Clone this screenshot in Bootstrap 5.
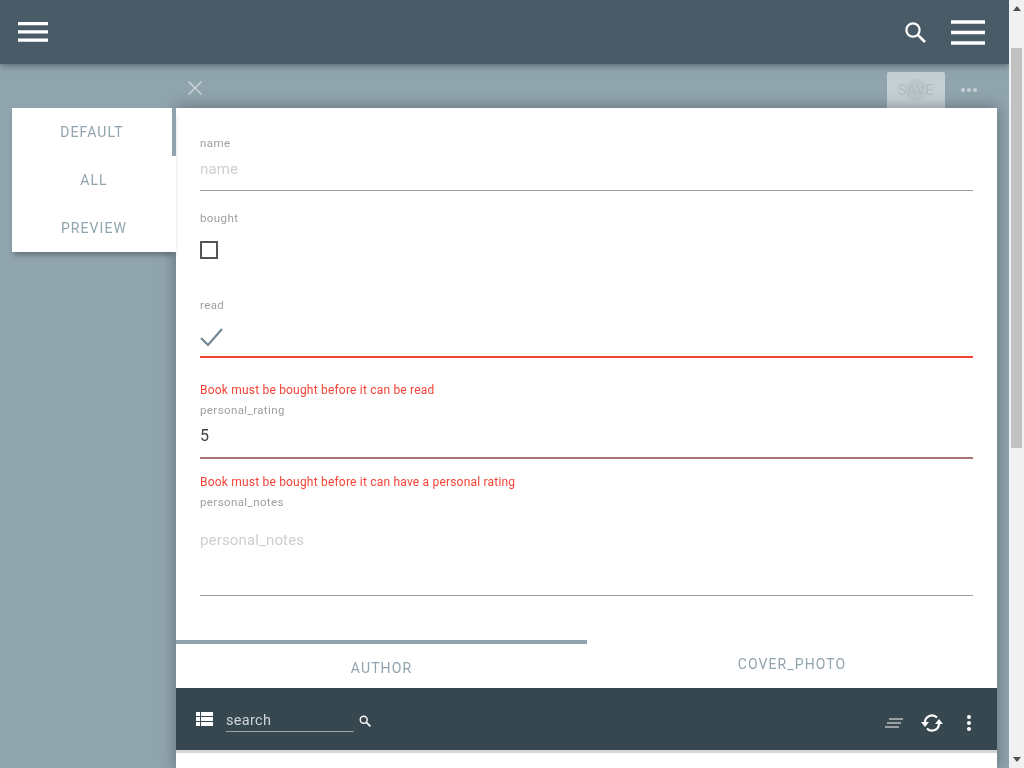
<!DOCTYPE html>
<html lang="en">
<head>
    <meta charset="UTF-8">
    <meta name="viewport" content="width=device-width, initial-scale=1.0">
    <title>Book</title>
    <link href="https://cdn.jsdelivr.net/npm/bootstrap@5.3.0/dist/css/bootstrap.min.css" rel="stylesheet">
    <style>
        html, body { height: 100%; }
        body { font-family: Roboto, "Liberation Sans", sans-serif; background: #90a4ae; overflow: hidden; }
        /* grey text edges, as in the picture */
        .lbl, .txt-in, .err-msg, .rate-in, .notes-in, .side-tab, .sub-tab, .search-box, .save-btn span { will-change: transform; }
        .page-main { width: 1009px; height: 768px; overflow: hidden; }
        .top-bar { height: 64px; background: #485b66; box-shadow: 0 2px 6px rgba(0,0,0,.35); padding: 0 24px 0 18px; position: relative; z-index: 2; }
        .sub-bar { height: 44px; padding-left: 187px; padding-right: 16px; padding-top: 8px; }
        .save-btn { width: 58px; height: 36px; background: #c4cfd3; border-radius: 2px 2px 0 0; color: #b3b9bd; font-size: 14px; letter-spacing: .6px; position: relative; }
        .save-btn::before { content: ""; position: absolute; left: 18px; top: 7px; width: 22px; height: 22px; border-radius: 50%; background: #bbc6ca; }
        .save-btn span { position: relative; }
        .more-dots { width: 48px; }
        .side-tabs { width: 164px; margin-left: 12px; height: 144px; background: #fff; box-shadow: 0 5px 5px -2px rgba(0,0,0,.3); flex: none; position: relative; z-index: 1; }
        .side-tab { height: 48px; color: #90a4ae; font-size: 14px; letter-spacing: 1.1px; }
        .side-tab-on { border-right: 4px solid #90a4ae; }
        .form-sheet { width: 821px; background: #fff; height: 660px; box-shadow: 0 0 14px rgba(0,0,0,.35); position: relative; }
        .form-area { padding: 0 24px; height: 532px; }
        .lbl { font-size: 11.5px; letter-spacing: .4px; color: #a0a0a0; line-height: 14px; }
        .txt-in { font-size: 15px; letter-spacing: .15px; line-height: 20px; color: #cfcfcf; border-bottom: 1px solid #9e9e9e; }
        .fld-name { padding-top: 28px; height: 83px; }
        .fld-name .txt-in { padding: 9px 0 11px; }
        .fld-bought { padding-top: 20px; height: 87px; }
        .box-off { width: 18px; height: 18px; border: 2px solid #555; margin-top: 16px; }
        .fld-read { padding-top: 20px; height: 124px; }
        .check-line { height: 45px; border-bottom: 2px solid #f44336; padding-top: 14px; margin-bottom: 25px; margin-top: 1px; }
        .err-msg { font-size: 12px; line-height: 14px; color: #f44336; letter-spacing: .2px; }
        .fld-rate { padding-top: 1px; }
        .rate-in { color: #424242; font-size: 16px; line-height: 20px; padding: 9px 0 11px; border-bottom: 2px solid #a97377; margin-bottom: 16px; }
        .fld-notes { padding-top: 6px; }
        .notes-in { color: #cfcfcf; font-size: 15px; letter-spacing: .15px; line-height: 20px; height: 87px; padding-top: 21px; border-bottom: 1px solid #9e9e9e; }
        .sub-tabs { height: 48px; }
        .sub-tab { color: #90a4ae; font-size: 14px; letter-spacing: 1.1px; text-align: center; }
        .sub-tab-on { width: 411px; border-top: 4px solid #90a4ae; padding-top: 14px; }
        .sub-tab-off { width: 410px; padding-top: 14px; }
        .list-bar { height: 65px; background: #37474f; border-bottom: 3px solid #d6d6d6; padding: 0 25px 0 20px; }
        .search-box { width: 128px; margin-left: 13px; margin-top: 5px; color: #cfd4d6; font-size: 14.5px; letter-spacing: .3px; line-height: 20px; border-bottom: 1px solid #9aa5aa; }
        .search-mag { margin-left: 5px; }
        .menu-big { margin-left: 25px; }
        .tools-right { margin-top: 8px; }
        .tool-sync { margin: 0 23px 0 18px; }
        .scroll-rail { width: 15px; height: 768px; background: #f1f1f1; }
        .scroll-arrow { height: 17px; }
        .scroll-space { flex: 1; padding: 31px 2px 0; }
        .scroll-thumb { height: 400px; background: #c1c1c1; }
    </style>
</head>
<body class="d-flex">
    <div class="page-main">
        <div class="top-bar d-flex align-items-center justify-content-between">
            <svg width="30" height="20" viewBox="0 0 30 20"><path d="M0 1.6h30M0 9.8h30M0 18.2h30" stroke="#fff" stroke-width="3.2"/></svg>
            <div class="d-flex align-items-center">
                <svg width="21" height="21" viewBox="0 0 21 21"><circle cx="8" cy="8" r="6.6" fill="none" stroke="#fff" stroke-width="2.2"/><path d="M12.8 12.8l7.2 7.2" stroke="#fff" stroke-width="2.6"/></svg>
                <svg width="34" height="25" viewBox="0 0 34 25" class="menu-big"><path d="M0 2h34M0 12.5h34M0 23h34" stroke="#fff" stroke-width="3.6"/></svg>
            </div>
        </div>
        <div class="sub-bar d-flex justify-content-between">
            <svg width="16" height="16" viewBox="0 0 16 16" class="mt-2"><path d="M1.5 1.5l13 13M14.5 1.5l-13 13" stroke="#ccd3d6" stroke-width="1.5"/></svg>
            <div class="d-flex">
                <div class="save-btn d-flex align-items-center justify-content-center"><span>SAVE</span></div>
                <div class="more-dots d-flex justify-content-center align-items-center">
                    <svg width="18" height="16" viewBox="0 0 18 16"><g fill="#c6d0d4"><circle cx="3" cy="8" r="2"/><circle cx="9" cy="8" r="2"/><circle cx="15" cy="8" r="2"/></g></svg>
                </div>
            </div>
        </div>
        <div class="d-flex">
            <div class="side-tabs">
                <div class="side-tab side-tab-on d-flex align-items-center justify-content-center">DEFAULT</div>
                <div class="side-tab d-flex align-items-center justify-content-center">ALL</div>
                <div class="side-tab d-flex align-items-center justify-content-center">PREVIEW</div>
            </div>
            <div class="form-sheet">
                <div class="form-area">
                    <div class="fld-name">
                        <div class="lbl">name</div>
                        <div class="txt-in">name</div>
                    </div>
                    <div class="fld-bought">
                        <div class="lbl">bought</div>
                        <div class="box-off"></div>
                    </div>
                    <div class="fld-read">
                        <div class="lbl">read</div>
                        <div class="check-line">
                            <svg width="24" height="20" viewBox="0 0 24 20" class="d-block"><path d="M1 11l7 7L22 2" fill="none" stroke="#6f8894" stroke-width="2.2"/></svg>
                        </div>
                        <div class="err-msg">Book must be bought before it can be read</div>
                    </div>
                    <div class="fld-rate">
                        <div class="lbl">personal_rating</div>
                        <div class="rate-in">5</div>
                        <div class="err-msg">Book must be bought before it can have a personal rating</div>
                    </div>
                    <div class="fld-notes">
                        <div class="lbl">personal_notes</div>
                        <div class="notes-in">personal_notes</div>
                    </div>
                </div>
                <div class="sub-tabs d-flex">
                    <div class="sub-tab sub-tab-on">AUTHOR</div>
                    <div class="sub-tab sub-tab-off">COVER_PHOTO</div>
                </div>
                <div class="list-bar d-flex align-items-center justify-content-between">
                    <div class="d-flex align-items-center">
                        <svg width="17" height="14" viewBox="0 0 17 14"><path fill="#fff" d="M0 0h4v4H0zM5 0h12v4H5zM0 5h4v4H0zM5 5h12v4H5zM0 10h4v4H0zM5 10h12v4H5z"/></svg>
                        <div class="search-box">search</div>
                        <svg width="12" height="12" viewBox="0 0 12 12" class="search-mag mt-1"><circle cx="4.7" cy="4.7" r="3.5" fill="none" stroke="#fff" stroke-width="1.4"/><path d="M7.4 7.4l4 4" stroke="#fff" stroke-width="1.6"/></svg>
                    </div>
                    <div class="tools-right d-flex align-items-center">
                        <svg width="18" height="10" viewBox="0 0 18 10"><path d="M4 1h14M2 5h14M0 9h14" stroke="#9a9fa2" stroke-width="2"/></svg>
                        <svg width="22" height="18" viewBox="0 0 22 18" class="tool-sync"><g fill="none" stroke="#fff" stroke-width="2.2"><path d="M4 8.5a7 7 0 0 1 12-5"/><path d="M18 9.5a7 7 0 0 1-12 5"/></g><path fill="#fff" d="M0 8h8l-4 5zM14 10h8l-4-5z"/></svg>
                        <svg width="6" height="18" viewBox="0 0 6 18"><g fill="#fff"><circle cx="3" cy="3" r="2"/><circle cx="3" cy="9" r="2"/><circle cx="3" cy="15" r="2"/></g></svg>
                    </div>
                </div>
            </div>
        </div>
    </div>
    <div class="scroll-rail d-flex flex-column">
        <div class="scroll-arrow d-flex align-items-center justify-content-center">
            <svg width="8" height="5" viewBox="0 0 8 5"><path d="M0 5h8L4 0z" fill="#505050"/></svg>
        </div>
        <div class="scroll-space"><div class="scroll-thumb"></div></div>
        <div class="scroll-arrow d-flex align-items-center justify-content-center">
            <svg width="8" height="5" viewBox="0 0 8 5"><path d="M0 0h8L4 5z" fill="#505050"/></svg>
        </div>
    </div>
    <script src="https://cdn.jsdelivr.net/npm/bootstrap@5.3.0/dist/js/bootstrap.bundle.min.js"></script>
</body>
</html>
